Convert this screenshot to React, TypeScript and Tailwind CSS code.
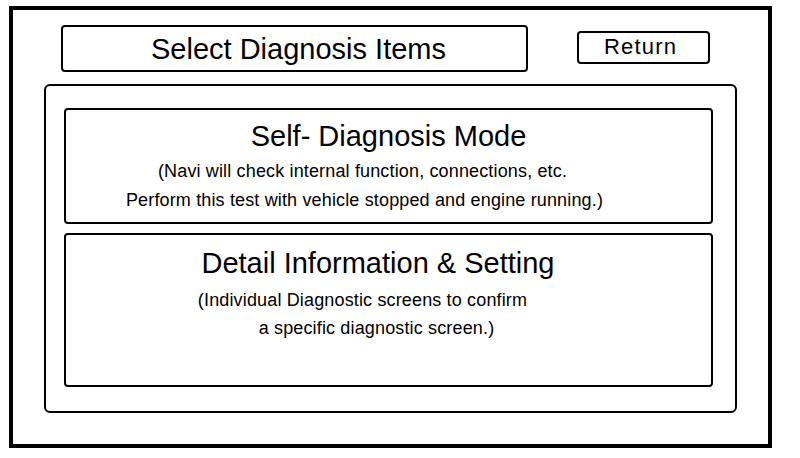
import React from "react";

export default function App() {
  return (
    <div className="w-[800px] h-[458px] bg-white pt-[6px] pl-[9px] text-black font-[family-name:'Liberation_Sans',Arial,sans-serif]">
      <div className="w-[763px] h-[442px] border-4 border-black flex flex-col">
        <div className="flex items-start pl-[48px] pt-[15px]">
          <div className="w-[467px] h-[47px] border-2 border-black rounded-[4px] flex items-center justify-center pl-[8px]">
            <span className="text-[29px] leading-[32px] whitespace-nowrap">Select Diagnosis Items</span>
          </div>
          <div className="ml-[49px] mt-[6px] w-[133px] h-[33px] border-2 border-black rounded-[4px] flex items-center justify-center pr-[6px] pb-[2px]">
            <span className="text-[22px] leading-[26px] tracking-[1.2px] whitespace-nowrap">Return</span>
          </div>
        </div>
        <div className="ml-[31px] mt-[12px] w-[693px] h-[329px] border-2 border-black rounded-[6px] pt-[22px] pl-[18px] flex flex-col gap-[9px]">
          <div className="w-[649px] h-[116px] border-2 border-black rounded-[4px] pt-[10px] flex flex-col">
            <div className="text-center text-[29px] leading-[32px] whitespace-nowrap">Self- Diagnosis Mode</div>
            <div className="mt-[5px] text-center text-[18px] leading-[29px] tracking-[0.15px] whitespace-nowrap pr-[52px]">
              (Navi will check internal function, connections, etc.
            </div>
            <div className="text-center text-[18px] leading-[29px] tracking-[0.15px] whitespace-nowrap pr-[48px]">
              Perform this test with vehicle stopped and engine running.)
            </div>
          </div>
          <div className="w-[649px] h-[154px] border-2 border-black rounded-[4px] pt-[12px] flex flex-col">
            <div className="text-center text-[29px] leading-[32px] whitespace-nowrap pr-[21px]">Detail Information &amp; Setting</div>
            <div className="mt-[7px] text-center text-[18px] leading-[28px] tracking-[0.15px] whitespace-nowrap pr-[52px]">
              (Individual Diagnostic screens to confirm
            </div>
            <div className="text-center text-[18px] leading-[28px] tracking-[0.15px] whitespace-nowrap pr-[24px]">
              a specific diagnostic screen.)
            </div>
          </div>
        </div>
      </div>
    </div>
  );
}
